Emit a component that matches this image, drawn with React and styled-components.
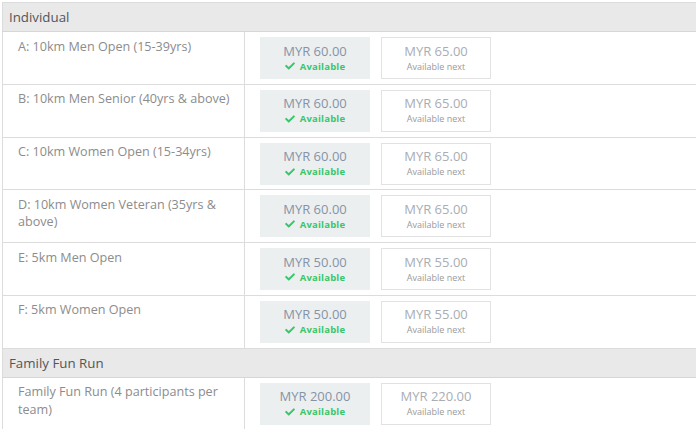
import React from 'react';
import styled, { createGlobalStyle } from 'styled-components';
import { FaCheck } from 'react-icons/fa';

const GlobalStyle = createGlobalStyle`
  body {
    margin: 0;
    background: #ffffff;
    font-family: "Open Sans", "Liberation Sans", sans-serif;
    overflow: hidden;
  }
`;

const Wrapper = styled.div`
  padding: 2px 0 0 2px;
`;

const Table = styled.table`
  width: 700px;
  border-collapse: collapse;
  border-top: 1px solid #dcdcdc;
  border-left: 1px solid #dcdcdc;
`;

const GroupHeader = styled.td`
  background: #e9e9e9;
  color: #555;
  font-size: 13.3px;
  height: 28px;
  padding: 0 6px;
  border-bottom: 1px solid #d6d6d6;
`;

const Row = styled.tr`
  border-bottom: 1px solid #dcdcdc;
`;

const Label = styled.td`
  width: 214px;
  vertical-align: top;
  padding: 5.5px 12px 4.3px 15px;
  color: #8c8c8c;
  font-size: 12.6px;
  line-height: 17.5px;
  border-right: 1px solid #dcdcdc;
`;

const Prices = styled.td`
  padding: 5px 15px 4.8px;
  vertical-align: top;
`;

const Boxes = styled.div`
  display: flex;
  gap: 11px;
`;

const PriceBox = styled.div`
  width: 110px;
  height: 42px;
  box-sizing: border-box;
  display: flex;
  flex-direction: column;
  align-items: center;
  justify-content: center;
  border: 1px solid ${p => (p.$current ? '#eceff0' : '#e2e2e2')};
  background: ${p => (p.$current ? '#eceff0' : '#ffffff')};
`;

const Amount = styled.div`
  font-size: 13px;
  line-height: 17px;
  color: ${p => (p.$current ? '#8494a6' : '#a9adb3')};
  margin-top: -1px;
`;

const Status = styled.div`
  display: flex;
  align-items: center;
  gap: 5px;
  font-size: 9.5px;
  font-weight: 700;
  color: #39c66b;
  line-height: 13px;
  letter-spacing: 0.2px;
`;

const NextNote = styled.div`
  font-size: 9px;
  color: #9a9a9a;
  line-height: 13px;
`;

const groups = [
  {
    title: 'Individual',
    items: [
      ['A: 10km Men Open (15-39yrs)', '60.00', '65.00'],
      ['B: 10km Men Senior (40yrs & above)', '60.00', '65.00'],
      ['C: 10km Women Open (15-34yrs)', '60.00', '65.00'],
      ['D: 10km Women Veteran (35yrs & above)', '60.00', '65.00'],
      ['E: 5km Men Open', '50.00', '55.00'],
      ['F: 5km Women Open', '50.00', '55.00'],
    ],
  },
  {
    title: 'Family Fun Run',
    items: [['Family Fun Run (4 participants per team)', '200.00', '220.00']],
  },
];

export default function App() {
  return (
    <Wrapper>
      <GlobalStyle />
      <Table>
        <tbody>
          {groups.map(group => (
            <React.Fragment key={group.title}>
              <tr>
                <GroupHeader colSpan={2}>{group.title}</GroupHeader>
              </tr>
              {group.items.map(([name, now, next]) => (
                <Row key={name}>
                  <Label>{name}</Label>
                  <Prices>
                    <Boxes>
                      <PriceBox $current>
                        <Amount $current>MYR {now}</Amount>
                        <Status>
                          <FaCheck size={10} />
                          Available
                        </Status>
                      </PriceBox>
                      <PriceBox>
                        <Amount>MYR {next}</Amount>
                        <NextNote>Available next</NextNote>
                      </PriceBox>
                    </Boxes>
                  </Prices>
                </Row>
              ))}
            </React.Fragment>
          ))}
        </tbody>
      </Table>
    </Wrapper>
  );
}
